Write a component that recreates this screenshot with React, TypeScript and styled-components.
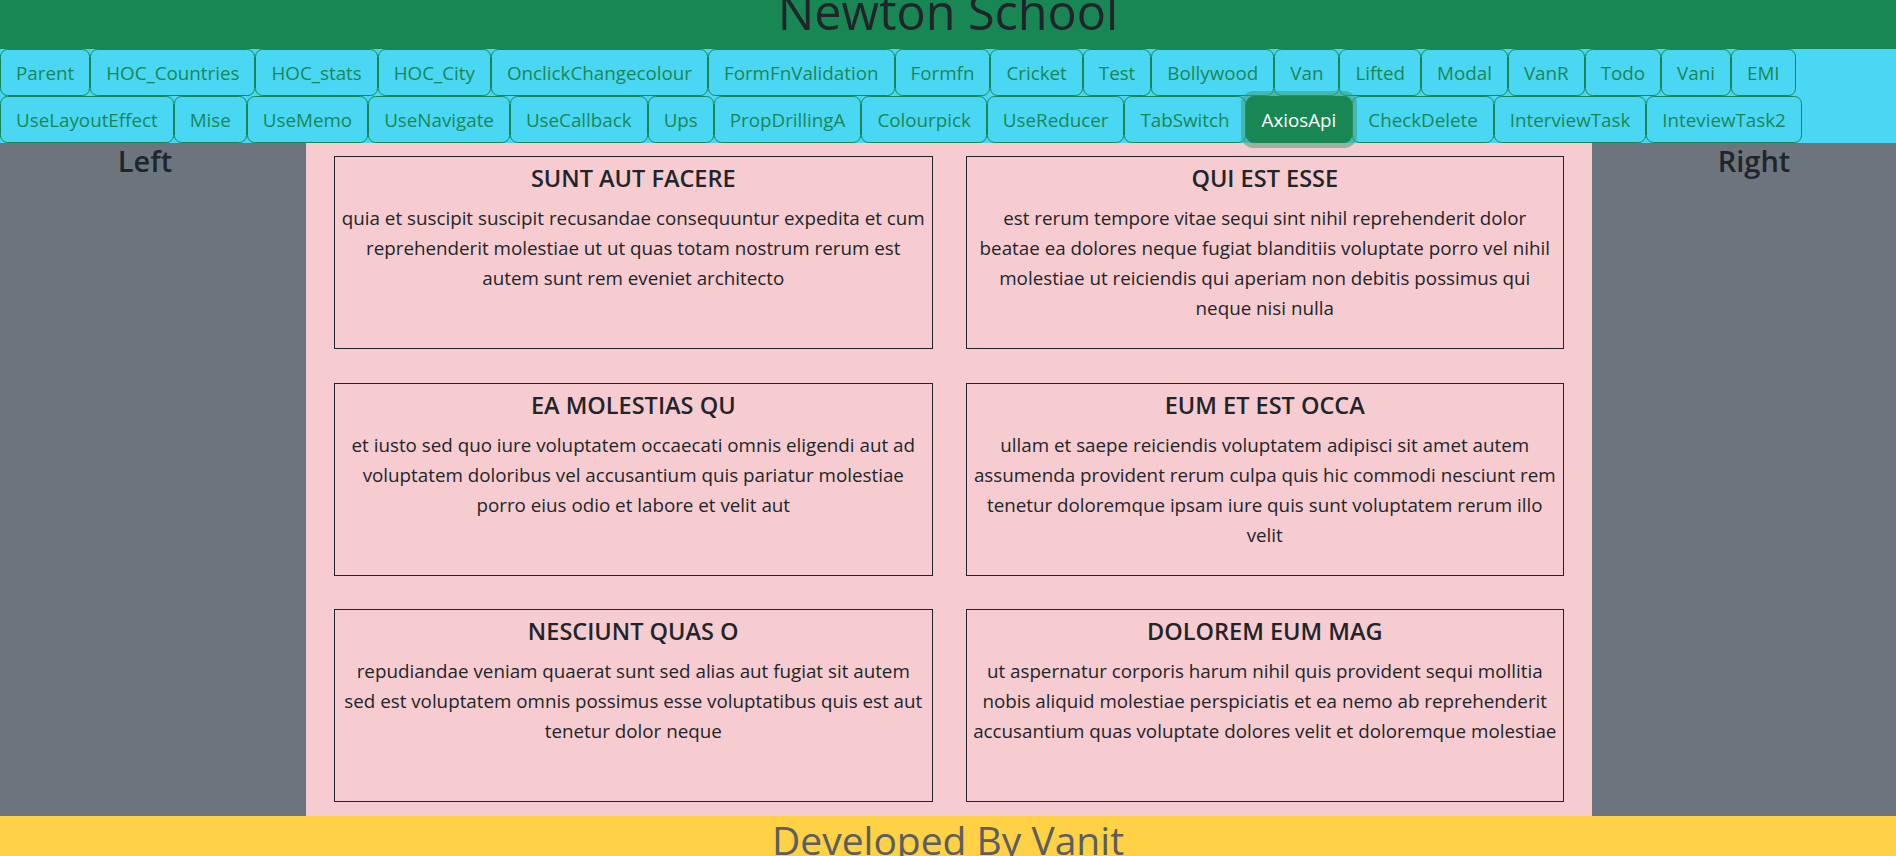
import * as React from 'react'

import styled, { createGlobalStyle } from 'styled-components'

const GlobalStyle = createGlobalStyle`
  html, body {
    margin: 0;
    overflow: hidden;
  }
  body {
    font-family: "Open Sans", "Noto Sans", sans-serif;
    font-size: 18.8px;
    line-height: 30px;
    color: #212529;
    background: #fff;
  }
  * {
    box-sizing: border-box;
  }
`

const Header = styled.header`
  height: 49px;
  overflow: hidden;
  background: #198754;
  text-align: center;
`

const Title = styled.h1`
  margin: -19px 0 0;
  font-size: 48.5px;
  font-weight: 500;
  line-height: 60px;
`

const NavBar = styled.nav`
  background: #4ad7f4;
`

const NavRow = styled.div`
  display: flex;
  flex-wrap: nowrap;
`

const NavButton = styled.button<{ $active?: boolean }>`
  position: relative;
  z-index: ${p => (p.$active ? 1 : 0)};
  padding: 7.5px 15px;
  border: 1px solid #198754;
  border-radius: 7.5px;
  font-family: inherit;
  font-size: 18.8px;
  line-height: 30px;
  white-space: nowrap;
  color: ${p => (p.$active ? '#fff' : '#198754')};
  background: ${p => (p.$active ? '#198754' : 'transparent')};
  box-shadow: ${p => (p.$active ? '0 0 0 5px rgba(60, 153, 110, 0.5)' : 'none')};
  cursor: pointer;
`

const Main = styled.main`
  display: grid;
  grid-template-columns: 306px 1fr 304px;
`

const Side = styled.aside<{ $right?: boolean }>`
  background: #6c757d;
  text-align: center;
  padding: ${p => (p.$right ? '0 0 0 20px' : '0 16px 0 0')};
`

const SideLabel = styled.h4`
  margin: 0;
  font-size: 29px;
  font-weight: 600;
  line-height: 36px;
`

const Posts = styled.section`
  display: grid;
  grid-template-columns: 1fr 1fr;
  column-gap: 33px;
  row-gap: 33.5px;
  padding: 13px 28px 14px;
  background: #f6ccd0;
`

const Card = styled.article`
  height: 193px;
  padding: 6px 5px 5px;
  border: 1px solid #212529;
  text-align: center;
  overflow: hidden;
`

const CardTitle = styled.h5`
  margin: 0 0 10px;
  font-size: 23.5px;
  font-weight: 600;
  line-height: 30px;
`

const CardText = styled.p`
  margin: 0;
`

const Footer = styled.footer`
  height: 40px;
  overflow: hidden;
  background: #ffd145;
  text-align: center;
`

const FooterText = styled.h2`
  margin: 0;
  font-size: 39px;
  font-weight: 500;
  line-height: 48px;
  color: #5b5e62;
`

const rows = [
  ['Parent', 'HOC_Countries', 'HOC_stats', 'HOC_City', 'OnclickChangecolour', 'FormFnValidation', 'Formfn', 'Cricket', 'Test', 'Bollywood', 'Van', 'Lifted', 'Modal', 'VanR', 'Todo', 'Vani', 'EMI'],
  ['UseLayoutEffect', 'Mise', 'UseMemo', 'UseNavigate', 'UseCallback', 'Ups', 'PropDrillingA', 'Colourpick', 'UseReducer', 'TabSwitch', 'AxiosApi', 'CheckDelete', 'InterviewTask', 'InteviewTask2'],
]

const posts = [
  {
    id: 1,
    title: 'sunt aut facere repellat provident occaecati excepturi optio reprehenderit',
    body: 'quia et suscipit suscipit recusandae consequuntur expedita et cum reprehenderit molestiae ut ut quas totam nostrum rerum est autem sunt rem eveniet architecto',
  },
  {
    id: 2,
    title: 'qui est esse',
    body: 'est rerum tempore vitae sequi sint nihil reprehenderit dolor beatae ea dolores neque fugiat blanditiis voluptate porro vel nihil molestiae ut reiciendis qui aperiam non debitis possimus qui neque nisi nulla',
  },
  {
    id: 3,
    title: 'ea molestias quasi exercitationem repellat qui ipsa sit aut',
    body: 'et iusto sed quo iure voluptatem occaecati omnis eligendi aut ad voluptatem doloribus vel accusantium quis pariatur molestiae porro eius odio et labore et velit aut',
  },
  {
    id: 4,
    title: 'eum et est occaecati',
    body: 'ullam et saepe reiciendis voluptatem adipisci sit amet autem assumenda provident rerum culpa quis hic commodi nesciunt rem tenetur doloremque ipsam iure quis sunt voluptatem rerum illo velit',
  },
  {
    id: 5,
    title: 'nesciunt quas odio',
    body: 'repudiandae veniam quaerat sunt sed alias aut fugiat sit autem sed est voluptatem omnis possimus esse voluptatibus quis est aut tenetur dolor neque',
  },
  {
    id: 6,
    title: 'dolorem eum magni eos aperiam quia',
    body: 'ut aspernatur corporis harum nihil quis provident sequi mollitia nobis aliquid molestiae perspiciatis et ea nemo ab reprehenderit accusantium quas voluptate dolores velit et doloremque molestiae',
  },
]

export default function App() {
  const [active, setActive] = React.useState('AxiosApi')
  return (
    <>
      <GlobalStyle />
      <Header>
        <Title>Newton School</Title>
      </Header>
      <NavBar>
        {rows.map((row, i) => (
          <NavRow key={i}>
            {row.map(name => (
              <NavButton key={name} $active={name === active} onClick={() => setActive(name)}>
                {name}
              </NavButton>
            ))}
          </NavRow>
        ))}
      </NavBar>
      <Main>
        <Side>
          <SideLabel>Left</SideLabel>
        </Side>
        <Posts>
          {posts.map(post => (
            <Card key={post.id}>
              <CardTitle>{post.title.slice(0, 15).toUpperCase()}</CardTitle>
              <CardText>{post.body}</CardText>
            </Card>
          ))}
        </Posts>
        <Side $right>
          <SideLabel>Right</SideLabel>
        </Side>
      </Main>
      <Footer>
        <FooterText>Developed By Vanit</FooterText>
      </Footer>
    </>
  )
}
